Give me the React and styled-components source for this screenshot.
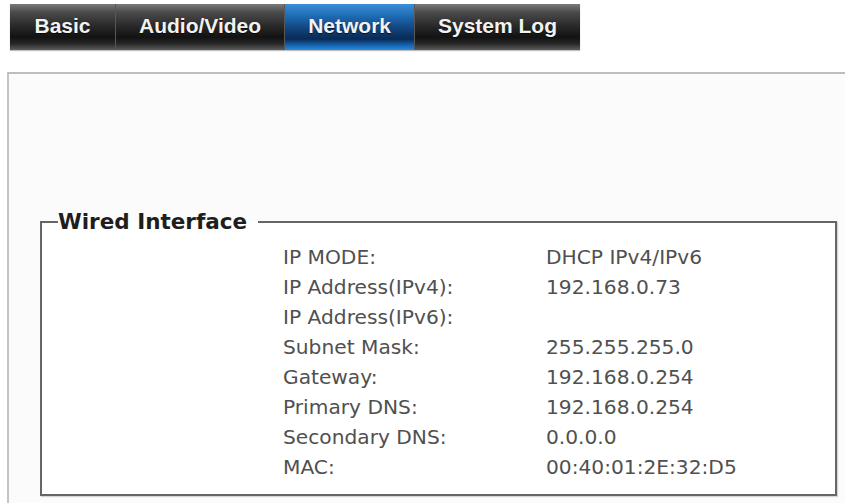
import React from 'react';
import styled, { createGlobalStyle } from 'styled-components';

const GlobalStyle = createGlobalStyle`
  html, body {
    margin: 0;
    padding: 0;
    background: #ffffff;
  }
  body {
    font-family: "DejaVu Sans", Verdana, sans-serif;
  }
`;

const tabs = ['Basic', 'Audio/Video', 'Network', 'System Log'];

const rows = [
  ['IP MODE:', 'DHCP IPv4/IPv6'],
  ['IP Address(IPv4):', '192.168.0.73'],
  ['IP Address(IPv6):', ''],
  ['Subnet Mask:', '255.255.255.0'],
  ['Gateway:', '192.168.0.254'],
  ['Primary DNS:', '192.168.0.254'],
  ['Secondary DNS:', '0.0.0.0'],
  ['MAC:', '00:40:01:2E:32:D5'],
];

const Page = styled.div`
  padding: 4px 0 0 7px;
  width: 838px;
  height: 499px;
  overflow: hidden;
`;

const TabBar = styled.nav`
  display: flex;
  width: max-content;
  height: 46px;
  margin-left: 3px;
  background: linear-gradient(to bottom, #7a7a7a 0%, #4b4b4b 18%, #2c2c2c 45%, #121212 72%, #262626 86%, #5c5c5c 100%);
  box-shadow: 0 1px 1px rgba(0, 0, 0, 0.25);
`;

const Tab = styled.div`
  display: flex;
  align-items: center;
  justify-content: center;
  padding: 0 23px 2px;
  min-width: ${({ $min }) => $min || 0}px;
  box-sizing: border-box;
  font-family: "Liberation Sans", Arial, sans-serif;
  font-weight: bold;
  font-size: 21px;
  color: #f2f2f2;
  text-shadow: 0 1px 1px rgba(0, 0, 0, 0.7);
  border-left: ${({ $first }) => ($first ? 'none' : '1px solid #575757')};
  background: ${({ $active }) =>
    $active
      ? 'linear-gradient(to bottom, #3b8fd6 0%, #1f6db6 25%, #11427a 55%, #0a2a55 76%, #1665b0 90%, #2a8be2 100%)'
      : 'transparent'};
`;

const Panel = styled.section`
  margin-top: 22px;
  height: 600px;
  padding: 0 0 0 31px;
  border-top: 2px solid #bdbdbd;
  border-left: 2px solid #c4c4c4;
  background: #fbfbfb;
`;

const Fieldset = styled.fieldset`
  margin: 135px 0 0 0;
  padding: 7px 0 12px 0;
  width: 797px;
  box-sizing: border-box;
  border: 2px solid #666666;
  box-shadow: 1px 1px 1px rgba(0, 0, 0, 0.15);
  background: #ffffff;
`;

const Legend = styled.legend`
  margin-left: 16px;
  padding: 0 11px 0 0;
  font-family: "DejaVu Sans", Verdana, sans-serif;
  font-weight: bold;
  font-size: 21.5px;
  line-height: 26px;
  color: #1e1e1e;
`;

const InfoGrid = styled.dl`
  display: grid;
  grid-template-columns: 263px 1fr;
  grid-auto-rows: 30px;
  margin: 0;
  padding-left: 241px;
  font-size: 20.2px;
  color: #505050;
`;

const Label = styled.dt`
  margin: 0;
  display: flex;
  align-items: center;
  white-space: nowrap;
`;

const Value = styled.dd`
  margin: 0;
  display: flex;
  align-items: center;
  white-space: nowrap;
`;

export default function App() {
  return (
    <>
      <GlobalStyle />
      <Page>
        <TabBar>
          {tabs.map((t, i) => (
            <Tab key={t} $first={i === 0} $min={i === 0 ? 105 : 0} $active={t === 'Network'}>
              {t}
            </Tab>
          ))}
        </TabBar>
        <Panel>
          <Fieldset>
            <Legend>Wired Interface</Legend>
            <InfoGrid>
              {rows.map(([label, value]) => (
                <React.Fragment key={label}>
                  <Label>{label}</Label>
                  <Value>{value}</Value>
                </React.Fragment>
              ))}
            </InfoGrid>
          </Fieldset>
        </Panel>
      </Page>
    </>
  );
}
